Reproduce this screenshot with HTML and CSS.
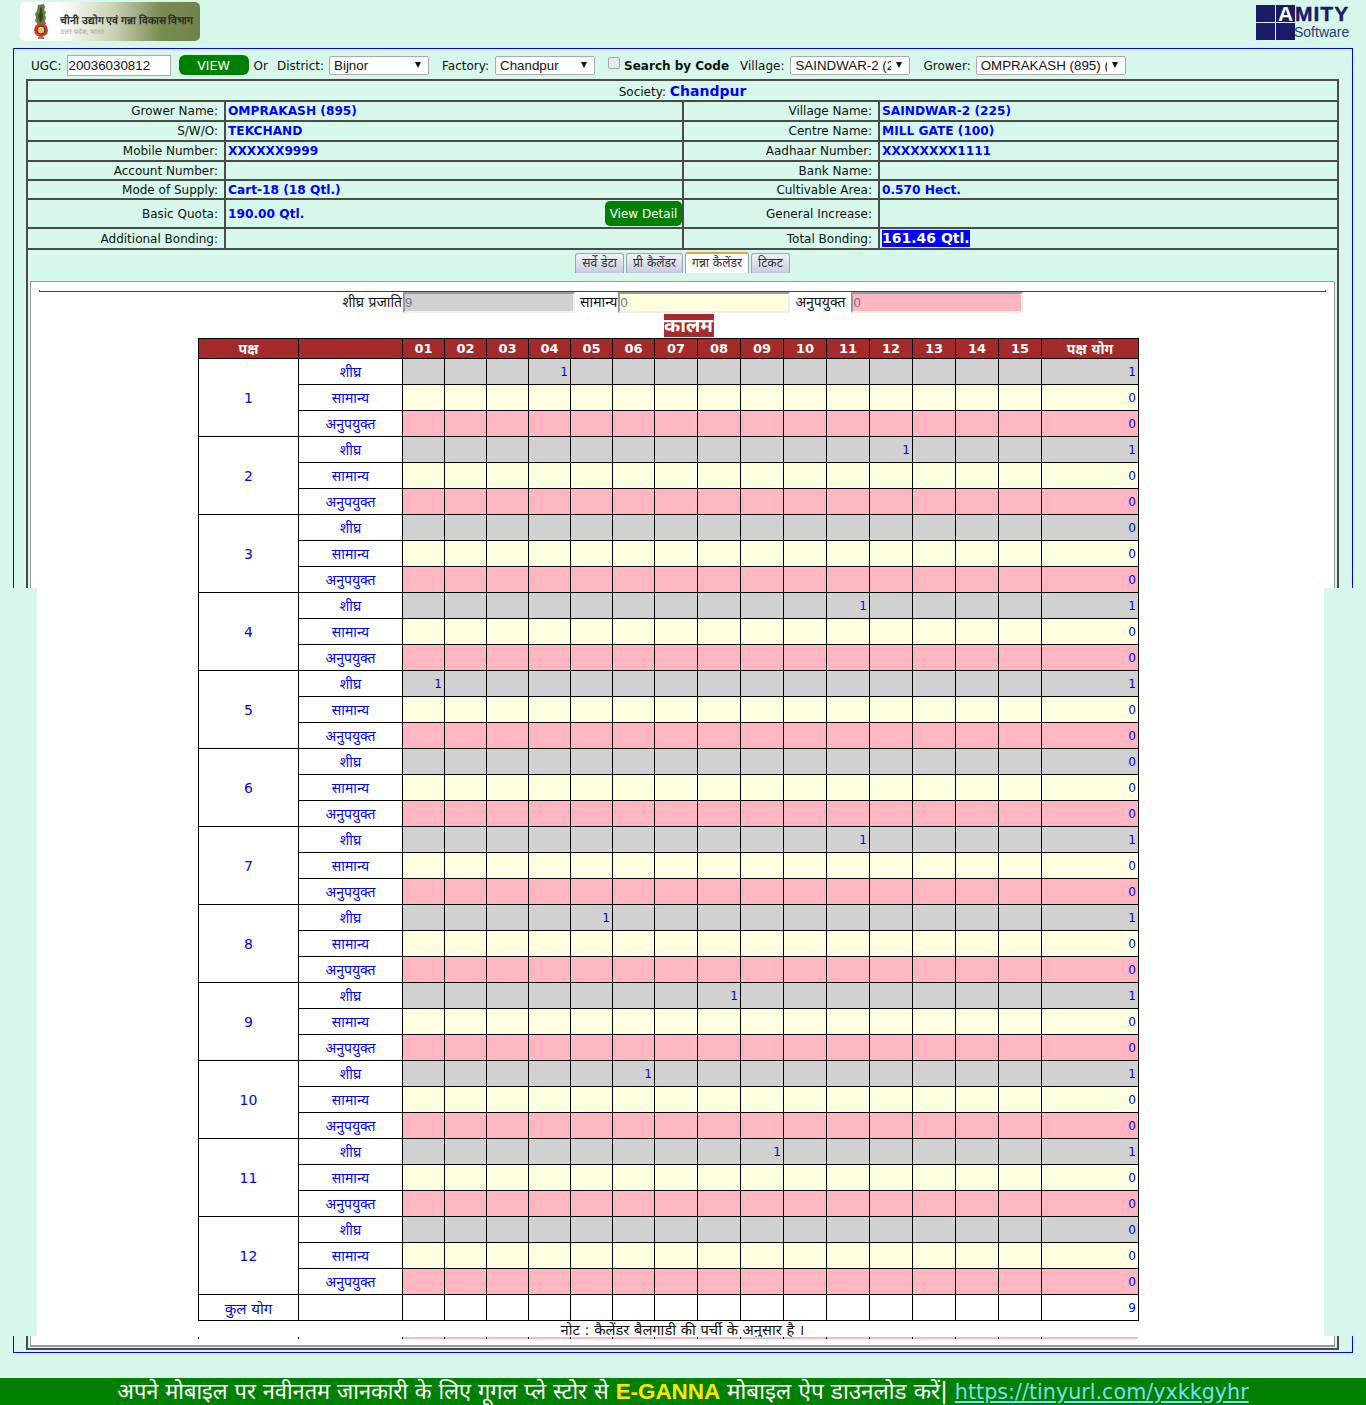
FILE: index.html
```html
<!DOCTYPE html>
<html lang="hi">
<head>
  <meta charset="UTF-8" />
  <meta name="viewport" content="width=device-width, initial-scale=1.0"/>
  <title>Grower Calendar</title>
  <link rel="stylesheet" href="styles.css">
</head>
<body>
  <header class="top-bar">
    <div class="dept-logo">
      <svg class="emblem" width="26" height="35" viewBox="0 0 26 35">
        <path d="M10 1l6-1 1 3-1 3 2 2-1 3 1 3-1 3 1 3-3 2h-5l-1-3-2-2 1-4-1-3 2-3z" fill="#5f7f3a"/>
        <path d="M12 3l2 1v4l1 4-1 5-2 2-1-4-1-3 2-4z" fill="#2f4a1e"/>
        <circle cx="13" cy="26" r="7" fill="#d93a3a"/>
        <circle cx="13" cy="26" r="4" fill="#e8c24a" stroke="#333" stroke-width="1"/>
        <path d="M10 33h6v2h-6z" fill="#7a8f5a"/>
      </svg>
      <div class="dept-text">
        <strong>चीनी उद्योग एवं गन्ना विकास विभाग</strong>
        <small>उत्तर प्रदेश, भारत</small>
      </div>
    </div>
    <div class="amity-logo">
      <div class="amity-squares"><i></i><i class="letter-a">A</i><i></i><i></i></div>
      <div class="amity-text">
        <b>MITY</b>
        <span>Software</span>
      </div>
    </div>
  </header>

  <div class="band"><div class="band-white"></div></div>

  <main class="frame">
    <form class="filters">
      <label>UGC:</label>
      <input class="ugc" type="text" value="20036030812" />
      <button class="view-btn" type="button">VIEW</button>
      <span class="or">Or</span>
      <label>District:</label>
      <span class="sel sel-100"><select><option>Bijnor</option></select></span>
      <label class="ml-13 wide">Factory:</label>
      <span class="sel sel-100"><select><option>Chandpur</option></select></span>
      <input class="code-check" type="checkbox" />
      <b class="code-label">Search by Code</b>
      <label class="wide">Village:</label>
      <span class="sel sel-120"><select><option>SAINDWAR-2 (225)</option></select></span>
      <label class="ml-13">Grower:</label>
      <span class="sel sel-150"><select><option>OMPRAKASH (895) (TEKCHAND)</option></select></span>
    </form>

    <table class="info">
      <colgroup>
        <col class="c-label"><col class="c-value"><col class="c-label2"><col class="c-value2">
      </colgroup>
      <tr class="h21">
        <td colspan="4" class="society">Society: <b>Chandpur</b></td>
      </tr>
      <tr class="h20">
        <th>Grower Name:</th><td>OMPRAKASH (895)</td>
        <th>Village Name:</th><td>SAINDWAR-2 (225)</td>
      </tr>
      <tr class="h20">
        <th>S/W/O:</th><td>TEKCHAND</td>
        <th>Centre Name:</th><td>MILL GATE (100)</td>
      </tr>
      <tr class="h20">
        <th>Mobile Number:</th><td>XXXXXX9999</td>
        <th>Aadhaar Number:</th><td>XXXXXXXX1111</td>
      </tr>
      <tr class="h19">
        <th>Account Number:</th><td></td>
        <th>Bank Name:</th><td></td>
      </tr>
      <tr class="h19">
        <th>Mode of Supply:</th><td>Cart-18 (18 Qtl.)</td>
        <th>Cultivable Area:</th><td>0.570 Hect.</td>
      </tr>
      <tr class="h29">
        <th>Basic Quota:</th>
        <td><div class="quota"><span>190.00 Qtl.</span><button class="detail-btn" type="button">View Detail</button></div></td>
        <th>General Increase:</th><td></td>
      </tr>
      <tr class="h21">
        <th>Additional Bonding:</th><td></td>
        <th>Total Bonding:</th><td><span class="total-bond">161.46 Qtl.</span></td>
      </tr>
      <tr>
        <td colspan="4" class="tab-cell">
          <ul class="tabs">
            <li>सर्वे डेटा</li>
            <li>प्री कैलेंडर</li>
            <li class="active">गन्ना कैलेंडर</li>
            <li>टिकट</li>
          </ul>
          <section class="panel">
            <hr class="rule" />
            <div class="legend">
              <label>शीघ्र प्रजाति</label><input class="l-gray" type="text" value="9" />
              <label>सामान्य</label><input class="l-yellow" type="text" value="0" />
              <label class="last">अनुपयुक्त</label><input class="l-pink" type="text" value="0" />
            </div>
            <div class="kalam-wrap"><span class="kalam">कालम</span></div>
            <table class="grid" id="grid">
              <colgroup id="gridCols"></colgroup>
              <thead><tr id="gridHead"></tr></thead>
              <tbody id="gridBody"></tbody>
            </table>
            <p class="note">नोट : कैलेंडर बैलगाडी की पर्ची के अनुसार है ।</p>
            <div class="stub" id="stub"></div>
          </section>
        </td>
      </tr>
    </table>
  </main>

  <footer class="notice">
    अपने मोबाइल पर नवीनतम जानकारी के लिए गूगल प्ले स्टोर से <b>E-GANNA</b> <span class="seg2">मोबाइल ऐप डाउनलोड करें|</span> <a href="#">https://tinyurl.com/yxkkgyhr</a>
  </footer>

  <script src="script.js"></script>
</body>
</html>
```

FILE: styles.css
```css
:root {
  --mint: #d6f7ea;
  --blue: #0000ff;
  --brown: #a52a2a;
  --gray-cell: #d1d1d1;
  --yellow-cell: #ffffe0;
  --pink-cell: #ffb6c1;
  --line: #4a4a4a;
}

* {
  box-sizing: border-box;
}

body {
  margin: 0;
  height: 1405px;
  position: relative;
  overflow: hidden;
  background: var(--mint);
  color: #111;
  font-family: "DejaVu Sans", "Noto Sans", sans-serif;
  font-size: 12px;
}

/* header */
.top-bar {
  height: 48px;
  display: flex;
  justify-content: space-between;
  padding: 2px 14px 0 20px;
}

.dept-logo {
  width: 180px;
  height: 39px;
  border-radius: 5px;
  background: linear-gradient(90deg, #fff 0%, #fff 22%, #c9d2b4 52%, #7a8c52 78%, #70834a 100%);
  display: flex;
  align-items: center;
  padding-left: 8px;
  gap: 6px;
}

.dept-text {
  display: flex;
  flex-direction: column;
  padding-top: 7px;
  white-space: nowrap;
  font-family: "Liberation Serif", serif;
}
.dept-text strong { font-size: 10.6px; line-height: 13px; color: #2b2b2b; }
.dept-text small { font-size: 7px; line-height: 10px; color: #a5a5a5; }

.amity-logo {
  display: flex;
  margin-top: 3px;
  height: 35px;
  font-family: "Liberation Sans", sans-serif;
}

.amity-squares {
  width: 39px;
  height: 35px;
  display: grid;
  grid-template-columns: 19px 19px;
  grid-template-rows: 17px 17px;
  gap: 1px;
}
.amity-squares i {
  background: #1a1a66;
  font-style: normal;
}
.letter-a {
  color: #fff;
  font-weight: bold;
  font-size: 21px;
  line-height: 18px;
  text-align: center;
}

.amity-text {
  width: 57px;
  display: flex;
  flex-direction: column;
}
.amity-text b {
  font-size: 21px;
  height: 18px;
  line-height: 18px;
  letter-spacing: 1px;
  -webkit-text-stroke: 0.4px #1a1a66;
  color: #1a1a66;
}
.amity-text span {
  font-size: 14px;
  line-height: 14px;
  margin: 2px 0 0 -1px;
  color: #2e3a78;
}

/* mint and white strip over the frame */
.band {
  position: absolute;
  top: 588px;
  left: 0;
  right: 0;
  height: 748px;
  background: var(--mint);
  z-index: 1;
  padding: 0 42px 0 37px;
}
.band-white {
  height: 100%;
  background: #fff;
}

/* main frame */
.frame {
  margin: 0 13px;
  height: 1305px;
  border: 1px solid var(--blue);
  padding: 4px 12px 0;
}

.filters {
  display: flex;
  align-items: center;
  height: 24px;
  padding-left: 5px;
}
.filters label {
  margin-right: 5px;
  padding-top: 1px;
}
.filters label.wide { margin-right: 6px; }

.ugc {
  width: 104px;
  height: 21px;
  padding: 0 1px;
  border: 1px solid #aaa;
  background: #fff;
  font: 13.33px "Liberation Sans", sans-serif;
  color: #111;
  margin-right: 8px;
}

.view-btn {
  width: 70px;
  height: 20px;
  border: none;
  border-radius: 6px;
  background: green;
  color: #fff;
  font: 12.5px "DejaVu Sans", sans-serif;
  padding: 0;
  margin-right: 5px;
}

.or {
  margin-right: 9px;
  padding-top: 1px;
}
.filters .ml-13 { margin-left: 13px; }

.sel {
  display: inline-block;
  position: relative;
  height: 19px;
}
.sel::after {
  content: '';
  position: absolute;
  right: 8px;
  top: 6px;
  border-style: solid;
  border-width: 6px 3.5px 0;
  border-color: #111 transparent transparent;
  pointer-events: none;
}
.sel select {
  appearance: none;
  width: 100%;
  height: 100%;
  border: 1px solid #aaa;
  border-radius: 2px;
  background: #fff;
  color: #111;
  padding: 0 18px 0 4px;
  font: 13.33px "Liberation Sans", sans-serif;
}
.sel-100 { width: 100px; }
.sel-120 { width: 120px; }
.sel-150 { width: 150px; }

.code-check {
  appearance: none;
  width: 12px;
  height: 12px;
  margin: 0 4px 4px 13px;
  border: 1px solid #aaa;
  border-radius: 2px;
  background: #e9e9e9;
}
.code-label {
  margin-right: 11px;
  padding-top: 1px;
  font-size: 12px;
}

/* info table */
.info {
  width: 1311px;
  table-layout: fixed;
  border-collapse: collapse;
  margin-top: 2px;
}
.c-label { width: 198px; }
.c-value { width: 458px; }
.c-label2 { width: 196px; }
.c-value2 { width: 459px; }

.info > tbody > tr > th,
.info > tbody > tr > td {
  border: 2px solid var(--line);
  padding: 0 2px;
}
.info > tbody > tr > th {
  text-align: right;
  font-weight: normal;
  padding-right: 6px;
}
.info > tbody > tr > td {
  font-weight: bold;
  color: var(--blue);
  font-size: 12.2px;
}
.h19 { height: 19px; }
.h20 { height: 20px; }
.h21 { height: 21px; }
.h29 { height: 29px; }

.info > tbody > tr > td.society {
  text-align: center;
  font-weight: normal;
  font-size: 12px;
  color: #111;
}
.society b { color: var(--blue); font-size: 14px; }

.quota {
  display: flex;
  justify-content: space-between;
  align-items: center;
  margin-right: -2px;
}
.detail-btn {
  width: 77px;
  height: 25px;
  border: none;
  border-radius: 5px;
  background: green;
  color: #fff;
  font: 12px "DejaVu Sans", sans-serif;
  padding: 0;
}

.total-bond {
  display: inline-block;
  background: var(--blue);
  color: #fff;
  font-size: 14px;
  line-height: 17px;
}

.info > tbody > tr > td.tab-cell {
  padding: 0 2px 1px;
  vertical-align: top;
}

/* tabs */
.tabs {
  list-style: none;
  margin: 0;
  padding: 3px 0 0;
  height: 31px;
  display: flex;
  justify-content: center;
  gap: 2px;
  font-weight: normal;
  font-size: 12.2px;
  color: #333;
}
.tabs li {
  height: 20px;
  padding: 0 6px;
  line-height: 19px;
  border: 1px solid #9aa5ad;
  border-bottom: none;
  border-radius: 3px 3px 0 0;
  background: linear-gradient(#f2f3f8, #c6cbe0);
}
.tabs li.active {
  background: #fff;
  border-top: 2px solid #e8a33d;
  margin-top: -1px;
  height: 21px;
}

/* calendar panel */
.panel {
  height: 1066px;
  background: #fff;
  border: 1px solid #999;
  border-bottom-width: 2px;
  color: #111;
  font-weight: normal;
}

.rule {
  height: 2px;
  margin: 8px 8px 0;
  border: solid #d40000;
  border-width: 0 1px 1px;
}

.legend {
  display: flex;
  justify-content: center;
  height: 21px;
  padding-right: 4px;
  font-size: 14px;
  line-height: 20px;
}
.legend label {
  margin: 0 1px 0 5px;
  white-space: nowrap;
}
.legend label.last { margin-right: 6px; }
.legend input {
  flex: none;
  width: 172px;
  height: 21px;
  padding: 0;
  color: #777;
  border: 2px solid #eee;
  border-top-color: #999;
  border-left-color: #999;
  font: 13px "Liberation Sans", sans-serif;
}
.l-gray { background: var(--gray-cell); }
.l-yellow { background: var(--yellow-cell); }
.l-pink { background: var(--pink-cell); }

.kalam-wrap {
  position: relative;
  z-index: 2;
  height: 25px;
  padding-left: 12px;
  text-align: center;
}
.kalam {
  display: inline-block;
  width: 50px;
  height: 23px;
  margin-top: 1px;
  background: var(--brown);
  color: #fff;
  font-size: 19.5px;
  font-weight: bold;
  line-height: 23px;
  white-space: nowrap;
}

.grid {
  position: relative;
  z-index: 2;
  width: 940px;
  margin-left: 167px;
  table-layout: fixed;
  border-collapse: collapse;
  color: var(--blue);
}
.grid th,
.grid td {
  border: 1px solid #000;
  padding: 0 2px;
}
.grid th {
  height: 20px;
  background: var(--brown);
  color: #fff;
  font-size: 13px;
}
.grid th.deva { font-size: 14px; }
.grid td {
  height: 26px;
  text-align: right;
  font-size: 12px;
}
.grid td.name {
  text-align: center;
  font-size: 14px;
  background: #fff;
}
.grid td.kul { font-size: 15px; }
.grid td.gray { background: var(--gray-cell); }
.grid td.yellow { background: var(--yellow-cell); }
.grid td.pink { background: var(--pink-cell); }
.grid td.white { background: #fff; }

.note {
  position: relative;
  z-index: 2;
  margin: 0;
  height: 16px;
  text-align: center;
  font-size: 14.7px;
  line-height: 18px;
  color: #111;
}

.stub {
  position: relative;
  z-index: 2;
  display: flex;
  height: 2px;
  margin-left: 167px;
  width: 940px;
}
.stub i {
  border-left: 1px solid #000;
}
.stub i.pink { background: var(--pink-cell); }

/* footer */
.notice {
  position: absolute;
  left: 0;
  right: 0;
  top: 1378px;
  height: 27px;
  background: green;
  color: #fff;
  text-align: center;
  white-space: nowrap;
  font-size: 21.8px;
  line-height: 27px;
}
.notice b {
  color: #ffe600;
  font-size: 22.4px;
  font-family: "Liberation Sans", sans-serif;
}
.notice .seg2 { font-size: 22.5px; }
.notice a {
  color: #7fdcee;
  font-size: 20.7px;
}
```

FILE: script.js
```js
// calendar column widths
const colWidths = [100, 104, 42, 42, 42, 42, 42, 42, 43, 43, 43, 43, 43, 43, 43, 43, 43, 97];
const kinds = [
  { name: 'शीघ्र', cls: 'gray' },
  { name: 'सामान्य', cls: 'yellow' },
  { name: 'अनुपयुक्त', cls: 'pink' }
];
// पक्ष -> कालम with a ticket
const tickets = { 1: 4, 2: 12, 4: 11, 5: 1, 7: 11, 8: 5, 9: 8, 10: 6, 11: 9 };

const pad = n => String(n).padStart(2, '0');

document.getElementById('gridCols').innerHTML =
  colWidths.map(w => `<col style="width:${w}px">`).join('');

let head = '<th class="deva">पक्ष</th><th></th>';
for (let c = 1; c <= 15; c++) head += `<th>${pad(c)}</th>`;
head += '<th class="deva">पक्ष योग</th>';
document.getElementById('gridHead').innerHTML = head;

let rows = '';
for (let p = 1; p <= 12; p++) {
  kinds.forEach((kind, k) => {
    rows += '<tr>';
    if (k === 0) rows += `<td class="name" rowspan="3">${p}</td>`;
    rows += `<td class="name">${kind.name}</td>`;
    let sum = 0;
    for (let c = 1; c <= 15; c++) {
      const val = k === 0 && tickets[p] === c ? 1 : '';
      if (val) sum = 1;
      rows += `<td class="${kind.cls}">${val}</td>`;
    }
    rows += `<td class="${kind.cls}">${sum}</td></tr>`;
  });
}
rows += '<tr><td class="name kul">कुल योग</td><td class="white"></td>';
for (let c = 1; c <= 15; c++) rows += '<td class="white"></td>';
rows += '<td class="white">9</td></tr>';
document.getElementById('gridBody').innerHTML = rows;

document.getElementById('stub').innerHTML = colWidths
  .map((w, i) => `<i class="${i > 1 ? 'pink' : ''}" style="width:${w}px"></i>`)
  .join('');
```
